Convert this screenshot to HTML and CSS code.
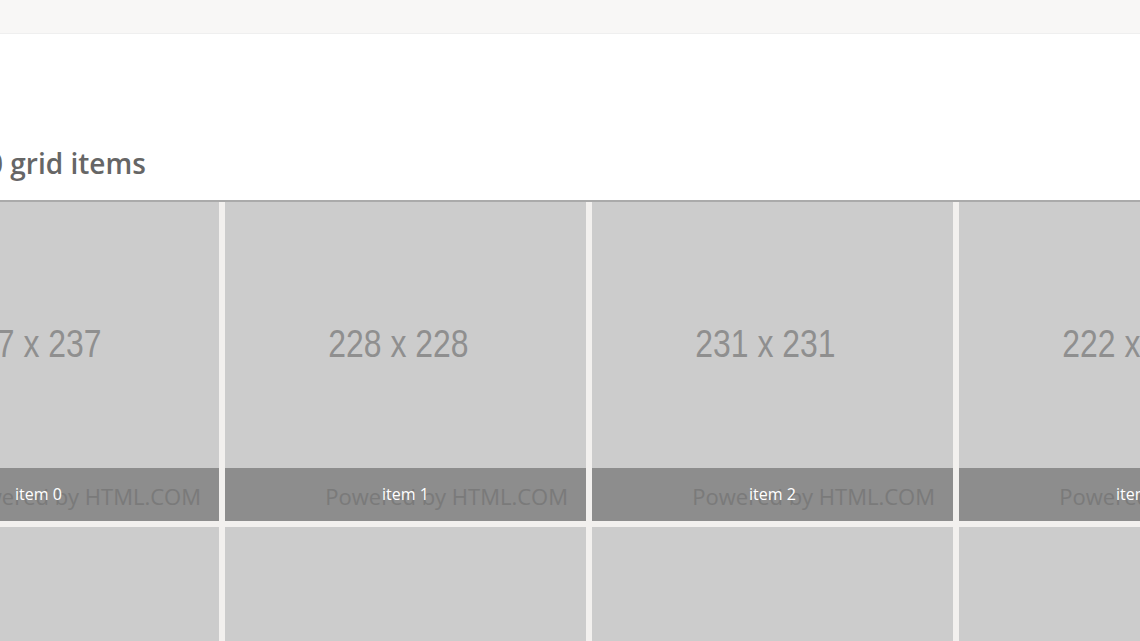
FILE: index.html
```html
<!DOCTYPE html>
<html lang="en">
<head>
<meta charset="utf-8">
<title>Grid items</title>
<link rel="stylesheet" href="styles.css">
</head>
<body>
<header class="topbar"></header>
<main class="content">
  <h1 class="title">100 grid items</h1>
  <section class="grid">
    <figure class="tile"><div class="ph"><span class="ph-size">237 x 237</span><span class="ph-mark">Powered by HTML.COM</span></div><figcaption class="cap">item 0</figcaption></figure>
    <figure class="tile"><div class="ph"><span class="ph-size">228 x 228</span><span class="ph-mark">Powered by HTML.COM</span></div><figcaption class="cap">item 1</figcaption></figure>
    <figure class="tile"><div class="ph"><span class="ph-size">231 x 231</span><span class="ph-mark">Powered by HTML.COM</span></div><figcaption class="cap">item 2</figcaption></figure>
    <figure class="tile"><div class="ph"><span class="ph-size">222 x 222</span><span class="ph-mark">Powered by HTML.COM</span></div><figcaption class="cap">item 3</figcaption></figure>
    <figure class="tile"><div class="ph"><span class="ph-size">240 x 240</span><span class="ph-mark">Powered by HTML.COM</span></div><figcaption class="cap">item 4</figcaption></figure>
    <figure class="tile"><div class="ph"><span class="ph-size">226 x 226</span><span class="ph-mark">Powered by HTML.COM</span></div><figcaption class="cap">item 5</figcaption></figure>
    <figure class="tile"><div class="ph"><span class="ph-size">235 x 235</span><span class="ph-mark">Powered by HTML.COM</span></div><figcaption class="cap">item 6</figcaption></figure>
    <figure class="tile"><div class="ph"><span class="ph-size">229 x 229</span><span class="ph-mark">Powered by HTML.COM</span></div><figcaption class="cap">item 7</figcaption></figure>
  </section>
</main>
</body>
</html>
```
FILE: styles.css
```css
html, body {
  margin: 0;
  padding: 0;
}
body {
  width: 1140px;
  height: 641px;
  overflow: hidden;
  background: #ffffff;
  font-family: "Open Sans", "Noto Sans", sans-serif;
}
.topbar {
  height: 33px;
  background: #f8f7f6;
  border-bottom: 1px solid #efefef;
}
.content {
  margin-left: -142px;
  width: 1600px;
}
.title {
  margin: 0;
  padding: 110px 0 0 0;
  height: 56px;
  box-sizing: content-box;
  font-size: 28px;
  font-weight: 600;
  line-height: 38px;
  color: #666666;
  text-indent: 97px;
}
.grid {
  display: grid;
  grid-template-columns: repeat(4, 361px);
  grid-auto-rows: 319px;
  gap: 6px;
  border-top: 2px solid #aaaaaa;
  background: #f2f0ee;
  width: 1462px;
}
.tile {
  margin: 0;
  position: relative;
  overflow: hidden;
  background: #cccccc;
}
.ph {
  height: 100%;
  display: flex;
  flex-direction: column;
  align-items: center;
}
.ph-size {
  margin-top: 122px;
  margin-right: 14px;
  font-family: "Liberation Sans", Arial, sans-serif;
  font-size: 38px;
  line-height: 40px;
  color: #8f8f8f;
  transform: scaleX(0.84);
  white-space: nowrap;
}
.ph-mark {
  margin-top: 117px;
  align-self: flex-end;
  margin-right: 18px;
  font-size: 22px;
  line-height: 30px;
  color: #b1b1b1;
  white-space: nowrap;
}
.cap {
  position: absolute;
  left: 0;
  right: 0;
  bottom: 0;
  height: 53px;
  background: rgba(0, 0, 0, 0.31);
  color: #ffffff;
  font-size: 16px;
  text-align: center;
  line-height: 53px;
}
```
